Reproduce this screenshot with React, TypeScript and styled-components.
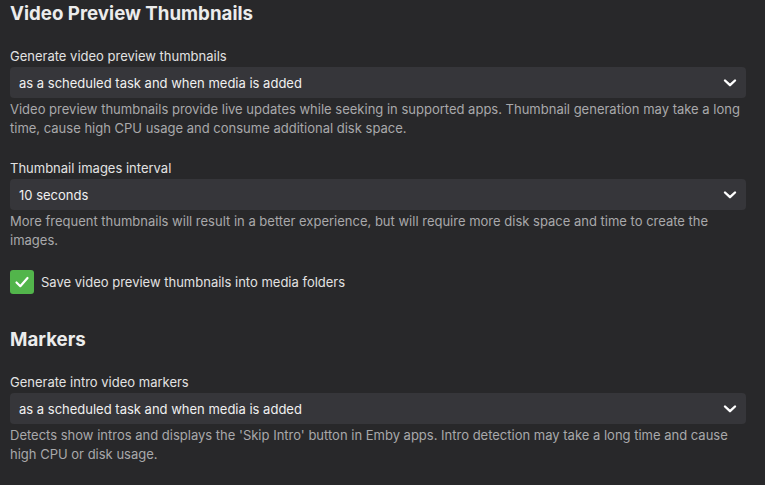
import React from "react";
import styled, { createGlobalStyle } from "styled-components";

const Global = createGlobalStyle`
  html, body { margin: 0; padding: 0; background: #28282a; }
  body { font-family: Inter, "Noto Sans", sans-serif; color: #e6e6e6; }
`;

const Page = styled.div`
  padding: 2px 19px 0 10px;
  display: flex;
  flex-direction: column;
`;

const Heading = styled.h2<{ $top?: number }>`
  margin: ${(p) => p.$top ?? 0}px 0 0 0;
  font-size: 18.7px;
  font-weight: 700;
  line-height: 24px;
  color: #ececec;
`;

const Field = styled.div<{ $top: number }>`
  margin-top: ${(p) => p.$top}px;
  display: flex;
  flex-direction: column;
`;

const Label = styled.div`
  font-size: 13px;
  line-height: 18px;
  color: #e2e2e2;
  margin-bottom: 2px;
`;

const SelectBox = styled.div`
  height: 31px;
  background: #36363a;
  border-radius: 4px;
  display: flex;
  align-items: center;
  justify-content: space-between;
  padding: 0 9px 0 9px;
  font-size: 13px;
  color: #f0f0f0;
`;

const Desc = styled.div`
  margin-top: 2px;
  font-size: 13px;
  line-height: 19px;
  color: #a9a9ab;
`;

const CheckRow = styled.label<{ $top: number }>`
  margin-top: ${(p) => p.$top}px;
  display: flex;
  align-items: center;
  gap: 7px;
  font-size: 13px;
  color: #e2e2e2;
`;

const Box = styled.span`
  width: 24px;
  height: 24px;
  border-radius: 3px;
  background: #52b54b;
  display: flex;
  align-items: center;
  justify-content: center;
`;

const Chevron = () => (
  <svg width="14" height="10" viewBox="0 0 14 10">
    <path d="M2 2.5 L7 7.2 L12 2.5" fill="none" stroke="#ffffff" strokeWidth="2.4" strokeLinecap="round" strokeLinejoin="round" />
  </svg>
);

const Select = ({ value }: { value: string }) => (
  <SelectBox>
    <span>{value}</span>
    <Chevron />
  </SelectBox>
);

export default function App() {
  return (
    <>
      <Global />
      <Page>
        <Heading>Video Preview Thumbnails</Heading>
        <Field $top={21}>
          <Label>Generate video preview thumbnails</Label>
          <Select value="as a scheduled task and when media is added" />
          <Desc>
            Video preview thumbnails provide live updates while seeking in supported apps. Thumbnail generation may take a long time, cause high CPU usage and consume additional disk space.
          </Desc>
        </Field>
        <Field $top={21}>
          <Label>Thumbnail images interval</Label>
          <Select value="10 seconds" />
          <Desc>
            More frequent thumbnails will result in a better experience, but will require more disk space and time to create the images.
          </Desc>
        </Field>
        <CheckRow $top={20}>
          <Box>
            <svg width="18" height="18" viewBox="0 0 18 18">
              <path d="M3.5 9.5 L7.3 13.2 L14.5 5" fill="none" stroke="#fff" strokeWidth="2.2" strokeLinecap="round" strokeLinejoin="round" />
            </svg>
          </Box>
          Save video preview thumbnails into media folders
        </CheckRow>
        <Heading $top={34}>Markers</Heading>
        <Field $top={21}>
          <Label>Generate intro video markers</Label>
          <Select value="as a scheduled task and when media is added" />
          <Desc>
            Detects show intros and displays the 'Skip Intro' button in Emby apps. Intro detection may take a long time and cause high CPU or disk usage.
          </Desc>
        </Field>
      </Page>
    </>
  );
}
